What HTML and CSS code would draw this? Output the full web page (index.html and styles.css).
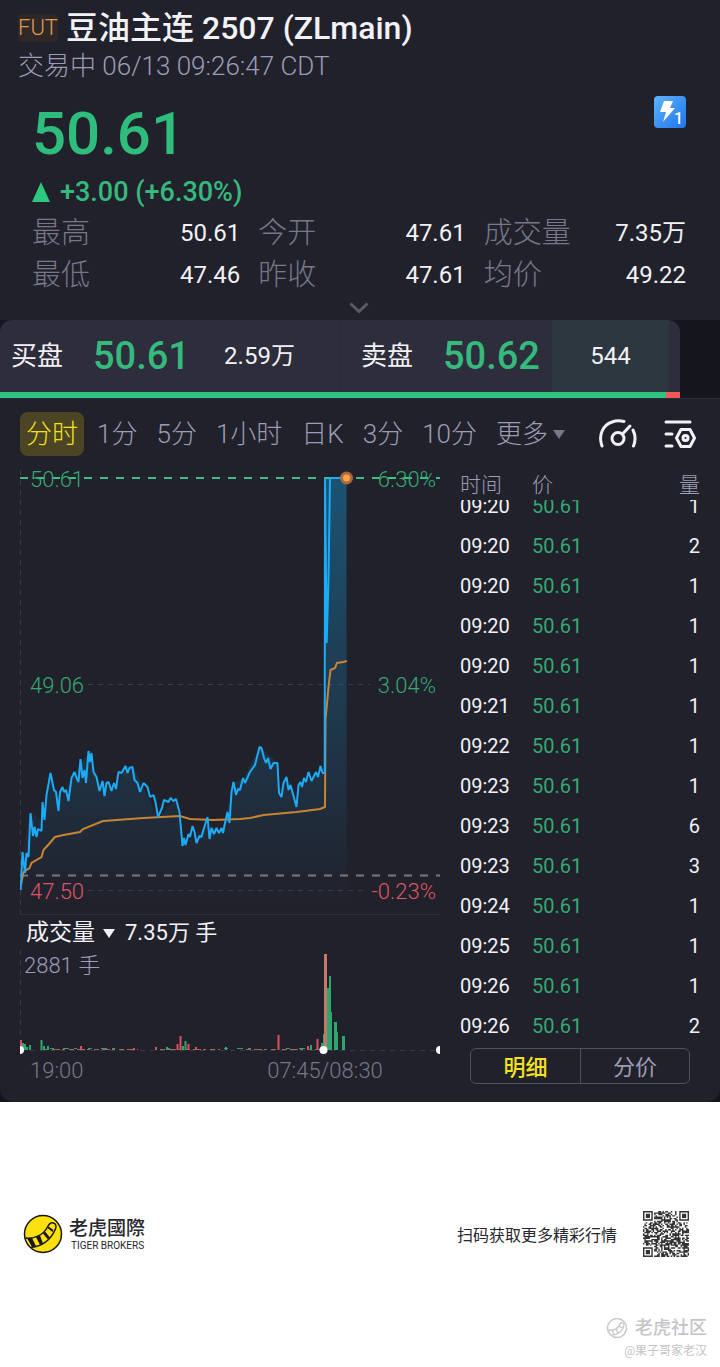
FILE: index.html
```html
<!DOCTYPE html>
<html lang="zh-CN">
<head>
  <meta charset="UTF-8">
  <meta name="viewport" content="width=device-width, initial-scale=1.0">
  <title>豆油主连 2507 (ZLmain)</title>
  <link rel="stylesheet" href="styles.css">
</head>
<body>
  <main class="quote">
    <div class="panel">
      <header class="head">
        <h1 class="title"><span class="tag">FUT</span>豆油主连 2507 (ZLmain)</h1>
        <p class="status">交易中 06/13 09:26:47 CDT</p>
      </header>

      <section class="summary">
        <div class="price-row">
          <div class="price">50.61</div>
          <svg class="flash" viewBox="0 0 32 32" aria-label="L1">
            <defs>
              <linearGradient id="flash-bg" x1="0" y1="0" x2="1" y2="1">
                <stop offset="0" stop-color="#5db4f8"/>
                <stop offset="1" stop-color="#1f74ee"/>
              </linearGradient>
            </defs>
            <rect width="32" height="32" rx="4" fill="url(#flash-bg)"/>
            <path d="M10 5h9l-3 7h5L9 26l3-10H6z" fill="#fff"/>
            <text class="flash-level" x="20" y="28">1</text>
          </svg>
        </div>
        <div class="change">
          <svg class="up" viewBox="0 0 18 20"><path d="M9 0l9 20H0z" fill="#2ec77f"/></svg>
          +3.00 (+6.30%)
        </div>
        <dl class="stats">
          <div class="stat"><dt>最高</dt><dd>50.61</dd></div>
          <div class="stat"><dt>今开</dt><dd>47.61</dd></div>
          <div class="stat"><dt>成交量</dt><dd>7.35万</dd></div>
          <div class="stat"><dt>最低</dt><dd>47.46</dd></div>
          <div class="stat"><dt>昨收</dt><dd>47.61</dd></div>
          <div class="stat"><dt>均价</dt><dd>49.22</dd></div>
        </dl>
        <button class="expand" type="button" aria-label="展开">
          <svg width="20" height="12" viewBox="0 0 20 12"><path d="M1.500 1.500L10 9.500l8.500-8" fill="none" stroke="#5b5b66" stroke-width="3"/></svg>
        </button>
      </section>

      <section class="book">
        <div class="book-main">
          <div class="sides">
            <div class="side">
              <span class="side-name">买盘</span>
              <span class="side-price">50.61</span>
              <span class="side-vol">2.59万</span>
            </div>
            <div class="side ask">
              <span class="side-name">卖盘</span>
              <span class="side-price">50.62</span>
              <span class="side-vol">544</span>
            </div>
          </div>
          <div class="ratio"><div class="ratio-buy" style="width: 98%"></div></div>
        </div>
      </section>

      <nav class="tabs">
        <button class="tab active" type="button">分时</button>
        <button class="tab" type="button">1分</button>
        <button class="tab" type="button">5分</button>
        <button class="tab" type="button">1小时</button>
        <button class="tab" type="button">日K</button>
        <button class="tab" type="button">3分</button>
        <button class="tab" type="button">10分</button>
        <span class="drop">
          <select class="tab more" aria-label="更多周期"><option>更多</option></select>
          <svg width="12" height="9" viewBox="0 0 12 9"><path d="M0 0h12L6 9z" fill="#777785"/></svg>
        </span>
        <span class="tools">
          <button class="tool" type="button" aria-label="仪表">
            <svg width="40" height="32" viewBox="0 0 40 32" fill="none" stroke="#f2f2f6" stroke-width="3" stroke-linecap="round">
              <path d="M4 28C0 17 5 7 14 4c4-1.500 8-1.500 12-.5"/>
              <path d="M35 12c2.500 5 2.500 11 .5 16"/>
              <circle cx="20" cy="20.500" r="6"/>
              <path d="M24.500 16L32 8"/>
            </svg>
          </button>
          <button class="tool" type="button" aria-label="设置">
            <svg width="32" height="32" viewBox="0 0 32 32" fill="none" stroke="#f2f2f6" stroke-width="3" stroke-linecap="round" stroke-linejoin="round">
              <path d="M2 4h24M2 16h6M2 28h6"/>
              <path d="M17 11.500h9l4.500 8.500-4.500 8.500h-9L12.500 20z"/>
              <circle cx="21.500" cy="20" r="2.500"/>
            </svg>
          </button>
        </span>
      </nav>

      <div class="board">
        <section class="charts">
          <svg class="chart" viewBox="0 0 420 446">
            <defs>
              <linearGradient id="area" x1="0" y1="0" x2="0" y2="1">
                <stop offset="0" stop-color="#12a5e8" stop-opacity="0.38"/>
                <stop offset="0.6" stop-color="#12a5e8" stop-opacity="0.16"/>
                <stop offset="1" stop-color="#12a5e8" stop-opacity="0"/>
              </linearGradient>
            </defs>
            <!-- grid -->
            <path class="grid" d="M.5 0V444M68 214.500H350M68 420.500H345"/>
            <path class="base" d="M0 444.500H420"/>
            <!-- price area and line -->
            <path fill="url(#area)" d="M1 420L3 382L10 343L22 350L30 303L38 335L51 310L69 282L80 318L96 319L105 296L113 297L138 347L156 329L163 376L187 355L203 363L213 312L223 310L240 277L257 293L261 327L267 307L276 337L280 312L305 303V8H326.500V436H1z"/>
            <path class="prev" d="M0 405.500H420"/>
            <path class="high" d="M0 8H420"/>
            <path class="avg" d="M1 415L3.500 402L9.500 398L11.500 393L21.500 387L23.500 380L29 374L35 367L43.500 365L60 362L63 359L83 351L97 350L123.500 348L160 346L170 349L193 350L220 349L230 348L243.500 345L276.500 342L300 339L305 337L305.500 250L308.500 217L310.500 200L315 198L317 193L323 192L327 191"/>
            <path class="line" d="M.7 420L2.500 382L5 403L6.500 383L8.500 387L10.500 343L13 366L14.500 357L16.500 367L18 359L21.500 361L22.500 332L24.500 350L26.500 325L30.500 303L34 320L36 322L38.500 341L40 322L42.500 317L44 322L46 320L48.500 331L51.500 308L54.500 302L56.500 308L58.500 312L60.500 289L62.500 308L64.500 300L66 313L68.500 281L70 292L71.500 283L73.500 302L76.500 307L79.500 321L82.500 311L84.500 326L86.500 313L88.500 312L91.500 321L94 313L96 319L98.500 302L101.500 303L105.500 296L107.500 303L109.500 298L112.500 297L114.500 310L117.500 313L120 322L123.500 313L127.500 317L130 327L133.500 325L135.500 332L138 347L142 338L144 330L148.500 332L150.500 328L153.500 331L156 329L159.500 342L162.500 376L164 368L165.500 375L168.500 364L170 367L172.500 356L174.500 362L176.500 373L179.500 366L181.500 367L184 358L187.500 347L189.500 369L191.500 358L194 364L196.500 358L199 363L201.500 358L203 363L205 353L207.500 342L209.500 353L211.500 322L213.500 312L216 325L218 319L220 320L223 308L225 313L230 302L235 295L239.500 277L241.500 278L244 288L246 293L248 288L250.500 299L253.500 293L257.500 293L259 323L261.500 327L263.500 313L266.500 307L268.500 320L270.500 315L276.500 337L278.500 315L280.500 312L282 317L284 308L286 312L288.500 302L291.500 311L296 302L298 307L300.500 296L302.500 303L304.700 303L305 8L306.700 173L308.500 108L310 8H326.500"/>
            <circle cx="326.500" cy="8" r="6.500" fill="#a96a3c"/>
            <circle cx="326.500" cy="8" r="3.500" fill="#ffa04d"/>
            <text class="label up-text" x="10" y="17">50.61</text>
            <text class="label up-text" x="10" y="223">49.06</text>
            <text class="label down-text" x="10" y="429">47.50</text>
            <text class="label up-text end" x="416" y="17">6.30%</text>
            <text class="label up-text end" x="416" y="223">3.04%</text>
            <text class="label down-text end" x="416" y="429">-0.23%</text>
          </svg>

          <div class="volume-head">
            <span class="drop">
              <select class="indicator" aria-label="指标"><option>成交量</option></select>
              <svg width="12" height="9" viewBox="0 0 12 9"><path d="M0 0h12L6 9z" fill="#f2f2f6"/></svg>
            </span>
            <span>7.35万 手</span>
          </div>

          <svg class="chart" viewBox="0 0 420 136">
            <path class="grid" d="M.5 0V100M0 100.500H420"/>
            <text class="label vol-max" x="4" y="23">2881 手</text>
            <!-- low volume along the axis -->
            <path d="M24 99.500H118M140 99.500H200M226 99.500H256M262 99.500H300" stroke="#a8654f" stroke-width="1" stroke-dasharray="5 3 8 2 3 4"/>
            <path d="M30 98.500H104M146 98.500H156M204 98.500H236M266 98.500H292" stroke="#2f9e68" stroke-width="1" stroke-dasharray="4 9 6 5 3 11"/>
            <path class="bar-up" d="M3 100V93M5 100V94M7 100V97M10 100V95M21.500 100V90M24 100V96M28 100V96M147 100V97M165.500 100V91M163 100V96M206 100V97M291 100V95M302 100V93M304 100V84"/>
            <path class="bar-down" d="M1 100V90M61 100V96M114 100V98M136 100V97M157.500 100V94M160.500 100V86M168.500 100V94M176 100V97M258.500 100V85M288 100V96M297.500 100V89"/>
            <path d="M307 100V38h2V26h2v36h1v38zM314 100V72h3v10h1v18zM322 100V86h3v14z" fill="#2fa76c"/>
            <path d="M305.500 100V4" stroke="#c4776a" stroke-width="3"/>
            <circle cx="0" cy="100" r="4" fill="#fff"/>
            <circle cx="303.500" cy="100" r="4" fill="#fff"/>
            <circle cx="420" cy="100" r="4" fill="#fff"/>
            <text class="label time" x="10" y="128">19:00</text>
            <text class="label time mid" x="305" y="128">07:45/08:30</text>
          </svg>
        </section>

        <section class="ticks">
          <table class="tick-table">
            <thead>
              <tr><th>时间</th><th>价</th><th>量</th></tr>
            </thead>
            <tbody>
              <tr class="cut"><td><span>09:20</span></td><td><span>50.61</span></td><td><span>1</span></td></tr>
              <tr><td>09:20</td><td>50.61</td><td>2</td></tr>
              <tr><td>09:20</td><td>50.61</td><td>1</td></tr>
              <tr><td>09:20</td><td>50.61</td><td>1</td></tr>
              <tr><td>09:20</td><td>50.61</td><td>1</td></tr>
              <tr><td>09:21</td><td>50.61</td><td>1</td></tr>
              <tr><td>09:22</td><td>50.61</td><td>1</td></tr>
              <tr><td>09:23</td><td>50.61</td><td>1</td></tr>
              <tr><td>09:23</td><td>50.61</td><td>6</td></tr>
              <tr><td>09:23</td><td>50.61</td><td>3</td></tr>
              <tr><td>09:24</td><td>50.61</td><td>1</td></tr>
              <tr><td>09:25</td><td>50.61</td><td>1</td></tr>
              <tr><td>09:26</td><td>50.61</td><td>1</td></tr>
              <tr><td>09:26</td><td>50.61</td><td>2</td></tr>
            </tbody>
          </table>
          <div class="switch">
            <button class="switch-btn on" type="button">明细</button>
            <button class="switch-btn" type="button">分价</button>
          </div>
        </section>
      </div>
    </div>
  </main>

  <footer class="share">
    <div class="share-row">
      <div class="brand">
        <svg class="brand-logo" viewBox="0 0 40 40">
          <circle cx="20" cy="20" r="18.500" fill="#fbe10d" stroke="#1a1708" stroke-width="1.500"/>
          <path d="M2.500 24c9 1 18-3 22-11 2-4 4-5 6-4 3 1 3 4 1.500 7C28 25 20 32 8 33.500" fill="none" stroke="#1a1708" stroke-width="1.500"/>
          <path d="M4 24l5 9 4-1-4-8zM13 23l4 8 3-1.500-3-8zM20 19.500l5 6 2-2-5-6zM24.500 14l5 4 1-2-5-3.500z" fill="#1a1708"/>
        </svg>
        <div>
          <div class="brand-name">老虎國際</div>
          <div class="brand-sub">TIGER BROKERS</div>
        </div>
      </div>
      <div class="scan">
        <span>扫码获取更多精彩行情</span>
        <svg class="qr" id="qr" viewBox="0 0 33 33" aria-label="二维码"></svg>
      </div>
    </div>
    <div class="mark">
      <div class="mark-name">
        <svg width="22" height="22" viewBox="0 0 22 22" fill="none" stroke="#c9c9cd" stroke-width="1.500">
          <circle cx="11" cy="11" r="9.500"/>
          <path d="M2 13c6 1 10-1 12-6 1-2 4-2 4 1-1 6-6 10-12 10M6 13l2 4M10 12l2 4M13 9l3 2"/>
        </svg>
        老虎社区
      </div>
      <div class="mark-user">@果子哥家老汉</div>
    </div>
  </footer>

  <script src="qr.js"></script>
</body>
</html>
```
FILE: styles.css
```css
/* Base styles */
* {
  box-sizing: border-box;
}

body {
  margin: 0;
  background-color: #fff;
  font-family: Roboto, "Noto Sans CJK SC", sans-serif;
  color: #f2f2f6;
}

h1, p, dl, dd {
  margin: 0;
}

button, select {
  margin: 0;
  padding: 0;
  border: none;
  background: none;
  color: inherit;
  font-family: inherit;
  font-weight: inherit;
  appearance: none;
}

svg {
  display: block;
}

.quote {
  background-color: #15151d;
}

.panel {
  background-color: #21212b;
  border-radius: 0 0 14px 14px;
  padding-bottom: 16px;
}

/* Title */
.head {
  padding: 9px 18px 0;
}

.title {
  display: flex;
  align-items: center;
  gap: 8px;
  font-size: 32px;
  font-weight: 500;
  line-height: 38px;
}

.tag {
  border-radius: 4px;
  background-color: #2e2829;
  color: #e39a4a;
  font-size: 22px;
  font-weight: 300;
  line-height: 28px;
}

.status {
  color: #9c9cb8;
  font-size: 26px;
  font-weight: 300;
  line-height: 38px;
}

/* Price summary */
.summary {
  padding: 11px 34px 0 32px;
}

.price-row {
  display: flex;
  justify-content: space-between;
  align-items: flex-start;
}

.price {
  color: #2ebd7c;
  font-size: 60px;
  font-weight: 500;
  line-height: 76px;
}

.flash {
  width: 32px;
  height: 32px;
}

.flash-level {
  fill: #fff;
  font-size: 16px;
  font-weight: 500;
}

.change {
  display: flex;
  align-items: center;
  gap: 10px;
  color: #36b97c;
  font-size: 27px;
  font-weight: 500;
  line-height: 40px;
}

.up {
  width: 18px;
  height: 20px;
}

.stats {
  display: grid;
  grid-template-columns: 208fr 207fr 202fr;
  column-gap: 18px;
}

.stat {
  display: flex;
  justify-content: space-between;
  line-height: 42px;
}

.stat dt {
  color: #77778a;
  font-size: 29px;
  font-weight: 300;
}

.stat dd {
  font-size: 24px;
}

.expand {
  display: block;
  margin: 0 auto;
  padding: 6px 0;
}

/* Bid / ask */
.book {
  padding-right: 40px;
  background-color: #15151d;
  border-bottom: 1px solid #2b2b35;
}

.book-main {
  overflow: hidden;
  border-radius: 12px 12px 0 0;
  background-color: #2d2d3c;
}

.sides {
  display: grid;
  grid-template-columns: 1fr 1fr;
}

.side {
  display: flex;
  align-items: center;
  padding: 0 22px 0 11px;
  line-height: 72px;
}

.ask {
  padding: 0 11px 0 20px;
  border-left: 1px solid #292937;
}

.side-name {
  font-size: 26px;
}

.side-price {
  margin-left: 30px;
  color: #36b97c;
  font-size: 38px;
  font-weight: 500;
}

.side-vol {
  width: 117px;
  margin-left: auto;
  font-size: 24px;
  text-align: center;
}

.ask .side-vol {
  background-color: #2c373f;
}

.ratio {
  height: 6px;
  background-color: #ee5a5a;
}

.ratio-buy {
  height: 100%;
  background-color: #2ec47f;
}

/* Period tabs */
.tabs {
  display: flex;
  align-items: center;
  gap: 7px;
  padding: 13px 24px 0 20px;
  color: #9c9cb4;
  font-weight: 300;
}

.tab {
  padding: 0 6px;
  border-radius: 8px;
  font-size: 26px;
  line-height: 44px;
}

.more {
  padding-right: 4px;
}

.active {
  background-color: #4b4524;
  color: #f5e11e;
}

.drop {
  display: flex;
  align-items: center;
}

.tools {
  display: flex;
  gap: 26px;
  margin-left: auto;
}

/* Charts and ticks */
.board {
  display: grid;
  grid-template-columns: 420fr 240fr;
  gap: 20px;
  padding: 14px 20px 0;
}

.chart {
  width: 100%;
}

.grid {
  fill: none;
  stroke: #3a3a46;
  stroke-dasharray: 5 5;
}

.base {
  stroke: #2f2f3a;
}

.prev {
  stroke: #77777f;
  stroke-width: 2;
  stroke-dasharray: 8 8;
}

.high {
  stroke: #3cc088;
  stroke-width: 2;
  stroke-dasharray: 8 8;
}

.avg {
  fill: none;
  stroke: #c98433;
  stroke-width: 2;
}

.line {
  fill: none;
  stroke: #1cabf6;
  stroke-width: 2;
  stroke-linejoin: bevel;
}

.bar-up {
  stroke: #2fa76c;
  stroke-width: 2;
}

.bar-down {
  stroke: #d9535c;
  stroke-width: 2;
}

.label {
  font-size: 22px;
  font-weight: 300;
}

.up-text {
  fill: #35a874;
}

.down-text {
  fill: #de5663;
}

.end {
  text-anchor: end;
}

.mid {
  text-anchor: middle;
}

.vol-max {
  fill: #9c9cb8;
}

.time {
  fill: #77778a;
}

.volume-head {
  display: flex;
  align-items: center;
  gap: 10px;
  padding-left: 6px;
  font-size: 22px;
  line-height: 34px;
}

.indicator {
  padding-right: 8px;
  font-size: 23px;
  line-height: 34px;
}

.tick-table {
  width: 100%;
  border-collapse: collapse;
  font-size: 20px;
  line-height: 40px;
}

.tick-table th {
  padding: 0;
  color: #9c9cb4;
  font-size: 21px;
  font-weight: 300;
  line-height: 30px;
  text-align: left;
}

.tick-table td {
  padding: 0;
}

.tick-table th:first-child {
  width: 30%;
}

.tick-table td:nth-child(2) {
  color: #35a874;
}

.tick-table th:last-child,
.tick-table td:last-child {
  text-align: right;
}

/* first row is scrolled half under the header */
.cut span {
  display: block;
  height: 26px;
  overflow: hidden;
  line-height: 12px;
}

.switch {
  display: grid;
  grid-template-columns: 1fr 1fr;
  margin: 2px 10px 0;
  border: 1px solid #50505e;
  border-radius: 6px;
}

.switch-btn {
  padding-top: 4px;
  color: #9c9cb4;
  font-size: 22px;
  line-height: 30px;
}

.switch-btn + .switch-btn {
  border-left: 1px solid #50505e;
}

.on {
  color: #f5e11e;
  font-weight: 500;
}

/* Share footer */
.share {
  padding: 108px 13px 8px 23px;
  color: #26262b;
}

.share-row {
  display: flex;
  justify-content: space-between;
  align-items: center;
  padding-right: 18px;
}

.brand {
  display: flex;
  align-items: center;
  gap: 6px;
}

.brand-logo {
  width: 40px;
  height: 40px;
}

.brand-name {
  padding-top: 4px;
  font-size: 19px;
  font-weight: 500;
  line-height: 20px;
}

.brand-sub {
  padding-left: 2px;
  font-size: 10px;
  line-height: 14px;
}

.scan {
  display: flex;
  align-items: center;
  gap: 26px;
  font-size: 16px;
}

.qr {
  width: 46px;
  height: 48px;
}

.mark {
  display: flex;
  flex-direction: column;
  align-items: flex-end;
  margin-top: 58px;
  color: #c4c4c8;
}

.mark-name {
  display: flex;
  align-items: center;
  gap: 7px;
  font-size: 18px;
  font-weight: 500;
  line-height: 24px;
}

.mark-user {
  font-size: 12px;
  line-height: 22px;
}
```
FILE: qr.js
```js
// Fills the code with modules and three corner finders
const svg = document.getElementById('qr');
const size = 33;
let seed = 7;
let d = '';

function finder(x, y) {
  return (x < 8 && y < 8) || (x > size - 9 && y < 8) || (x < 8 && y > size - 9);
}

for (let y = 0; y < size; y++) {
  for (let x = 0; x < size; x++) {
    seed = (seed * 16807) % 2147483647;
    if (!finder(x, y) && seed % 100 < 56) d += `M${x} ${y}h1v1h-1z`;
  }
}

[[0, 0], [size - 7, 0], [0, size - 7]].forEach(([x, y]) => {
  d += `M${x} ${y}h7v7h-7zM${x + 1} ${y + 1}v5h5v-5zM${x + 2} ${y + 2}h3v3h-3z`;
});

svg.innerHTML = `<path d="${d}" fill="#333"/>`;
```
